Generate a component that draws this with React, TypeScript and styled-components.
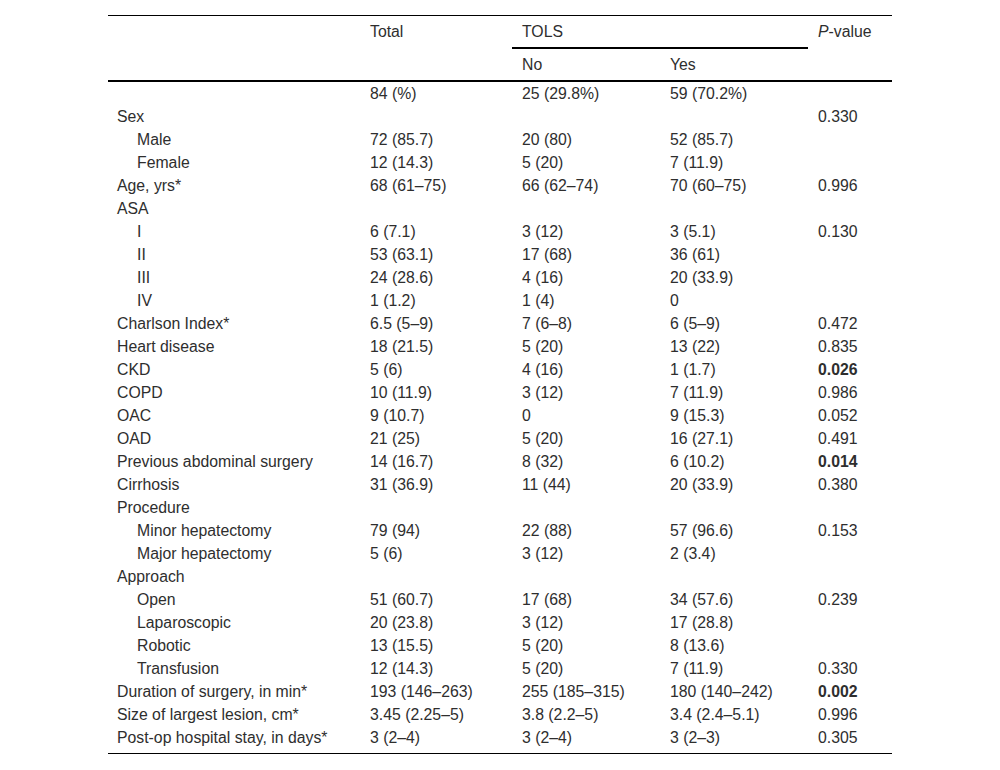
import React from "react";
import styled, { createGlobalStyle } from "styled-components";

const Global = createGlobalStyle`
  html, body { margin: 0; padding: 0; background: #fff; }
  body { font-family: "Liberation Sans", Arial, sans-serif; color: #2e2e2e; }
`;

const Page = styled.div`
  padding: 15px 108px 0 108px;
`;

const Table = styled.table`
  width: 784px;
  border-collapse: collapse;
  font-size: 15.8px;
  table-layout: fixed;
`;

const HeadCell = styled.th<{ $underline?: boolean }>`
  font-weight: normal;
  text-align: left;
  vertical-align: top;
  padding: 8px 10px 7px 10px;
  line-height: 16px;
  border-bottom: ${(p) => (p.$underline ? "2px solid #000" : "none")};
`;

const Head = styled.thead`
  border-top: 1px solid #000;
  border-bottom: 2px solid #000;
`;

const Body = styled.tbody`
  border-bottom: 1px solid #000;
`;

const Cell = styled.td<{ $indent?: boolean; $bold?: boolean; $last?: boolean }>`
  padding: 3px 10px ${(p) => (p.$last ? "7px" : "3px")} ${(p) => (p.$indent ? "29px" : "9px")};
  line-height: 17px;
  text-align: left;
  vertical-align: top;
  font-weight: ${(p) => (p.$bold ? "bold" : "normal")};
  white-space: nowrap;
`;

const NumCell = styled(Cell)`
  padding-left: 10px;
`;

type Row = { label: string; indent?: boolean; cells: string[]; p?: string; bold?: boolean };

const rows: Row[] = [
  { label: "", cells: ["84 (%)", "25 (29.8%)", "59 (70.2%)"] },
  { label: "Sex", cells: ["", "", ""], p: "0.330" },
  { label: "Male", indent: true, cells: ["72 (85.7)", "20 (80)", "52 (85.7)"] },
  { label: "Female", indent: true, cells: ["12 (14.3)", "5 (20)", "7 (11.9)"] },
  { label: "Age, yrs*", cells: ["68 (61–75)", "66 (62–74)", "70 (60–75)"], p: "0.996" },
  { label: "ASA", cells: ["", "", ""] },
  { label: "I", indent: true, cells: ["6 (7.1)", "3 (12)", "3 (5.1)"], p: "0.130" },
  { label: "II", indent: true, cells: ["53 (63.1)", "17 (68)", "36 (61)"] },
  { label: "III", indent: true, cells: ["24 (28.6)", "4 (16)", "20 (33.9)"] },
  { label: "IV", indent: true, cells: ["1 (1.2)", "1 (4)", "0"] },
  { label: "Charlson Index*", cells: ["6.5 (5–9)", "7 (6–8)", "6 (5–9)"], p: "0.472" },
  { label: "Heart disease", cells: ["18 (21.5)", "5 (20)", "13 (22)"], p: "0.835" },
  { label: "CKD", cells: ["5 (6)", "4 (16)", "1 (1.7)"], p: "0.026", bold: true },
  { label: "COPD", cells: ["10 (11.9)", "3 (12)", "7 (11.9)"], p: "0.986" },
  { label: "OAC", cells: ["9 (10.7)", "0", "9 (15.3)"], p: "0.052" },
  { label: "OAD", cells: ["21 (25)", "5 (20)", "16 (27.1)"], p: "0.491" },
  { label: "Previous abdominal surgery", cells: ["14 (16.7)", "8 (32)", "6 (10.2)"], p: "0.014", bold: true },
  { label: "Cirrhosis", cells: ["31 (36.9)", "11 (44)", "20 (33.9)"], p: "0.380" },
  { label: "Procedure", cells: ["", "", ""] },
  { label: "Minor hepatectomy", indent: true, cells: ["79 (94)", "22 (88)", "57 (96.6)"], p: "0.153" },
  { label: "Major hepatectomy", indent: true, cells: ["5 (6)", "3 (12)", "2 (3.4)"] },
  { label: "Approach", cells: ["", "", ""] },
  { label: "Open", indent: true, cells: ["51 (60.7)", "17 (68)", "34 (57.6)"], p: "0.239" },
  { label: "Laparoscopic", indent: true, cells: ["20 (23.8)", "3 (12)", "17 (28.8)"] },
  { label: "Robotic", indent: true, cells: ["13 (15.5)", "5 (20)", "8 (13.6)"] },
  { label: "Transfusion", indent: true, cells: ["12 (14.3)", "5 (20)", "7 (11.9)"], p: "0.330" },
  { label: "Duration of surgery, in min*", cells: ["193 (146–263)", "255 (185–315)", "180 (140–242)"], p: "0.002", bold: true },
  { label: "Size of largest lesion, cm*", cells: ["3.45 (2.25–5)", "3.8 (2.2–5)", "3.4 (2.4–5.1)"], p: "0.996" },
  { label: "Post-op hospital stay, in days*", cells: ["3 (2–4)", "3 (2–4)", "3 (2–3)"], p: "0.305" },
];

export default function App() {
  return (
    <Page>
      <Global />
      <Table>
        <colgroup>
          <col style={{ width: 252 }} />
          <col style={{ width: 152 }} />
          <col style={{ width: 148 }} />
          <col style={{ width: 148 }} />
          <col style={{ width: 84 }} />
        </colgroup>
        <Head>
          <tr>
            <HeadCell rowSpan={2} />
            <HeadCell rowSpan={2}>Total</HeadCell>
            <HeadCell colSpan={2} $underline>TOLS</HeadCell>
            <HeadCell rowSpan={2}>
              <i>P</i>-value
            </HeadCell>
          </tr>
          <tr>
            <HeadCell>No</HeadCell>
            <HeadCell>Yes</HeadCell>
          </tr>
        </Head>
        <Body>
          {rows.map((r, i) => {
            const last = i === rows.length - 1;
            return (
              <tr key={i}>
                <Cell $indent={r.indent} $last={last}>{r.label}</Cell>
                {r.cells.map((c, j) => (
                  <NumCell key={j} $last={last}>{c}</NumCell>
                ))}
                <NumCell $bold={r.bold} $last={last}>{r.p ?? ""}</NumCell>
              </tr>
            );
          })}
        </Body>
      </Table>
    </Page>
  );
}
